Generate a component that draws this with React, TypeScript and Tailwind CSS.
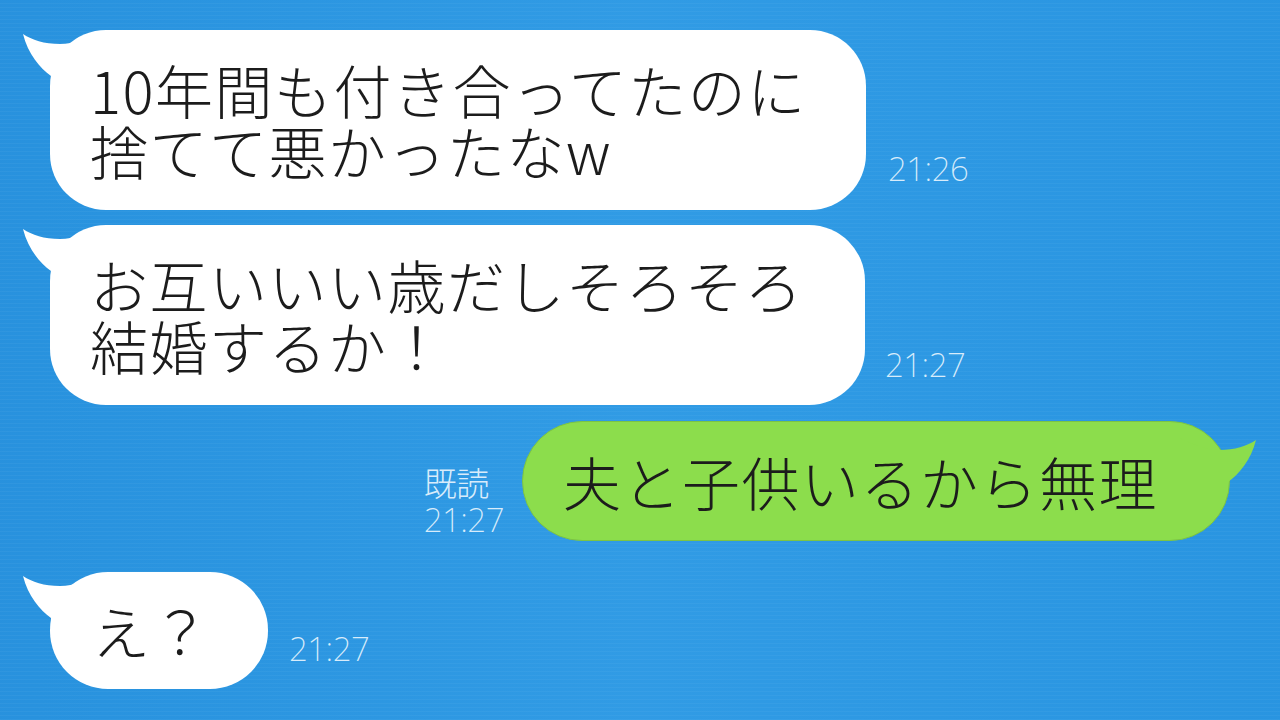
import React from "react";

function Tail({ className, fill }: { className: string; fill: string }) {
  return (
    <svg
      className={className}
      width="90"
      height="52"
      viewBox="0 0 90 52"
      aria-hidden="true"
    >
      <path
        d="M3,4 C12,10 24,14 40,14 C55,14 65,8 80,2 L80,52 L31,52 L31,46 C20,38 8,24 3,4 Z"
        fill={fill}
      />
    </svg>
  );
}

const msgText =
  "font-['Noto_Sans_CJK_JP','Noto_Sans',sans-serif] text-[58px] leading-[61px] tracking-[1.5px] text-[#1c1c1c] font-light";
const timeText =
  "font-['Noto_Sans','Noto_Sans_CJK_JP',sans-serif] font-extralight text-[33px] leading-[33px] text-[#d8ecfb] tracking-[-0.5px]";

export default function App() {
  return (
    <div className="relative w-[1280px] h-[720px] overflow-hidden bg-[#2a98e4]">
      <div className="absolute inset-0 bg-[linear-gradient(90deg,rgba(0,40,120,0.06),rgba(255,255,255,0.03)_50%,rgba(0,40,120,0.03))]" />
      <div className="absolute inset-0 bg-[repeating-linear-gradient(0deg,rgba(255,255,255,0.035)_0px,rgba(255,255,255,0.035)_1px,transparent_1px,transparent_4px)]" />
      <div className="relative flex flex-col pt-[30px] px-[50px]">
        {/* Row 1 */}
        <div className="flex items-end">
          <div className="relative w-[816px] h-[180px] bg-white rounded-[56px] flex items-center pl-[40px]">
            <Tail className="absolute left-[-30px] top-0" fill="#ffffff" />
            <p className={`relative ${msgText}`}>
              10年間も付き合ってたのに
              <br />
              捨てて悪かったなw
            </p>
          </div>
          <span className={`ml-[22px] mb-[25px] ${timeText}`}>21:26</span>
        </div>

        {/* Row 2 */}
        <div className="flex items-end mt-[15px]">
          <div className="relative w-[815px] h-[180px] bg-white rounded-[56px] flex items-center pl-[40px]">
            <Tail className="absolute left-[-30px] top-0" fill="#ffffff" />
            <p className={`relative ${msgText}`}>
              お互いいい歳だしそろそろ
              <br />
              結婚するか！
            </p>
          </div>
          <span className={`ml-[20px] mb-[24px] ${timeText}`}>21:27</span>
        </div>

        {/* Row 3 */}
        <div className="flex items-end justify-end mt-[16px]">
          <div className="flex flex-col mr-[18px] mb-[5px]">
            <span className={`${timeText} font-['Noto_Sans_CJK_JP',sans-serif] font-light text-[31px] leading-[42px]`}>
              既読
            </span>
            <span className={timeText}>21:27</span>
          </div>
          <div className="relative w-[708px] h-[120px] bg-[#8cdd4c] border border-[#7cc443] rounded-[60px] flex items-center pl-[40px]">
            <Tail
              className="absolute right-[-30px] top-[14px] scale-x-[-1]"
              fill="#8cdd4c"
            />
            <p className={`relative ${msgText}`}>夫と子供いるから無理</p>
          </div>
        </div>

        {/* Row 4 */}
        <div className="flex items-end mt-[31px]">
          <div className="relative w-[218px] h-[117px] bg-white rounded-[58px] flex items-center pl-[42px]">
            <Tail className="absolute left-[-30px] top-0" fill="#ffffff" />
            <p className={`relative ${msgText}`}>え？</p>
          </div>
          <span className={`ml-[21px] mb-[24px] ${timeText}`}>21:27</span>
        </div>
      </div>
    </div>
  );
}
